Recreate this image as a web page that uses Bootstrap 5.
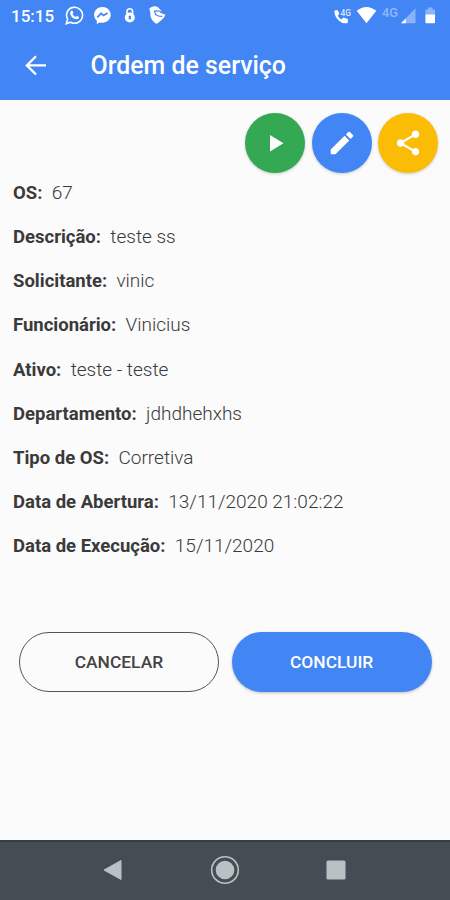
<!DOCTYPE html>
<html lang="pt-BR">
<head>
<meta charset="utf-8">
<meta name="viewport" content="width=device-width, initial-scale=1">
<title>Ordem de serviço</title>
<link href="https://cdn.jsdelivr.net/npm/bootstrap@5.3.0/dist/css/bootstrap.min.css" rel="stylesheet">
<style>
body{font-family:Roboto,sans-serif;background:#fbfbfc;color:#3a3a3a;height:900px;overflow:hidden}
.blue-bg{background:#4285f4}
.top-area{height:100px}
.status-bar{height:32px;padding:0 12px 0 11px}
.clock{font-size:17px;font-weight:500;line-height:32px;width:54px}
.title-bar{height:68px;padding-left:24px}
.title-text{font-size:24.9px;font-weight:500;line-height:68px;margin:0 0 0 42.5px}
.actions{padding:13px 12px 0 0;gap:6.5px}
.fab{width:60px;height:60px;padding:0;border:0;color:#fff;box-shadow:0 1px 3px rgba(0,0,0,.2)}
.green{background:#34a853}.yellow{background:#fbbc05}
.fields{padding:0 13px;margin-top:-2px}
.field{height:44.15px;line-height:44.15px;white-space:nowrap}
.field dt{font-weight:700;font-size:18.5px;margin-right:9.3px}
.field dd{font-weight:300;font-size:19px}
.choices{padding:0 18.5px 0 19px;margin-top:64px;gap:13px}
.choice{height:60px;border-radius:30px;font-size:17.4px;font-weight:500;padding:0}
.cancel{border:1px solid #555;color:#444}
.done{color:#fff;border:0;box-shadow:0 1px 3px rgba(0,0,0,.25)}
.done:hover{color:#fff}
.nav-keys{height:60px;background:#454d54;border-top:2px solid #353f43;padding:0 104px 2px 103px}
svg{display:block;flex:none}
</style>
<script src="https://cdn.jsdelivr.net/npm/bootstrap@5.3.0/dist/js/bootstrap.bundle.min.js"></script>
</head>
<body class="d-flex flex-column">
<header class="blue-bg text-white top-area">
  <div class="status-bar d-flex align-items-center">
    <span class="clock">15:15</span>
    <svg width="105" height="32" viewBox="65 0 105 32" fill="none">
      <path d="M66.3 23.7l1.3-4.5a8 8 0 1 1 3 3z" stroke="#fff" stroke-width="1.6"/>
      <path d="M70.6 11.3q1.5-1.6 2.1-.2l.7 1.7-.9 1.3q1.1 2.2 3.2 3l1.1-1.2 2.3 1.1q-.2 2.4-2.6 2.3-5.900-1.100-6.400-6.400z" fill="#fff"/>
      <path d="M102.400 7c-4.700 0-8.300 3.400-8.300 7.800 0 2.400 1 4.400 2.700 5.800V24l3-1.600c5.900 1.500 10.900-2.200 10.900-7.600 0-4.400-3.600-7.800-8.300-7.800z" fill="#fff"/>
      <path d="M97.300 17.300l3.900-4 2.300 2.200 4-2.500" stroke="#4285f4" stroke-width="1.700"/>
      <path d="M127 14v-2.500a2.800 2.800 0 0 1 5.600 0V14" stroke="#fff" stroke-width="1.600"/>
      <circle cx="129.800" cy="17.500" r="5" fill="#fff"/><path d="M129.800 15.700v3.600" stroke="#4285f4" stroke-width="2.200"/>
      <path d="M149.300 8.500q4-3.500 8.500-1.500l4.200 4.500-2.500 1 5.900 2.300q-1.500 4.500-9 9.200-5-3.200-5.900-7.800.3-3.700-1.200-7.700z" fill="#fff"/>
      <path d="M161.500 11.700q-3.500-1.300-7-.5l1.300 3.600q3.200 2 6.500 1.500" stroke="#4285f4" stroke-width="1.200"/>
    </svg>
    <svg class="ms-auto" width="105" height="32" viewBox="333 0 105 32">
      <path d="M334.500 10.500l3-.5 1.900 3.800-1.700 1.900q1.200 2.500 3.700 3.700l2-1.900 4.400 1.500v3.900q-4.900 1.700-9.300-2.700-4.500-4.500-4-9.700z" fill="#fff"/>
      <text x="340.500" y="16" fill="#dce9ff" font-size="9.500" font-weight="500" textLength="10.500" lengthAdjust="spacingAndGlyphs">4G</text>
      <path d="M356.700 10.800q9.700-7.600 19.600 0l-9.800 12.500z" fill="#fff"/>
      <text x="382" y="17" fill="#8fb8fb" font-size="12" font-weight="500" textLength="16" lengthAdjust="spacingAndGlyphs">4G</text>
      <path d="M415.500 8.300v15h-14.500z" fill="#8ab4f8"/><path d="M405.800 18.500v4.800h-4.700z" fill="#fff"/>
      <path d="M428 7.500h4.500v2h2.500v6h-9.600v-6h2.600z" fill="#8ab4f8"/><path d="M425.400 14.500h9.600v7.700q0 1-1 1h-7.600q-1 0-1-1z" fill="#fff"/>
    </svg>
  </div>
  <div class="title-bar d-flex align-items-center">
    <svg width="24" height="24" viewBox="0 0 24 24" fill="none" stroke="#fff" stroke-width="2.300"><path d="M12 2.300L2.800 11.400l9.200 9.100M3 11.400H22"/></svg>
    <h1 class="title-text">Ordem de serviço</h1>
  </div>
</header>
<main class="flex-grow-1">
  <div class="actions d-flex justify-content-end">
    <button class="fab green rounded-circle d-flex align-items-center justify-content-center" aria-label="Iniciar"><svg width="30" height="30" viewBox="0 0 30 30"><path d="M10 7v16.500L23.500 15.200z" fill="#fff"/></svg></button>
    <button class="fab blue-bg rounded-circle d-flex align-items-center justify-content-center" aria-label="Editar"><svg width="30" height="30" viewBox="0 0 24 24" fill="#fff"><path d="M3 17.250V21h3.750L17.810 9.940l-3.750-3.750L3 17.250zM20.710 7.040a1 1 0 0 0 0-1.410l-2.340-2.340a1 1 0 0 0-1.410 0l-1.830 1.830 3.750 3.750 1.830-1.830z"/></svg></button>
    <button class="fab yellow rounded-circle d-flex align-items-center justify-content-center" aria-label="Compartilhar"><svg width="30" height="30" viewBox="0 0 24 24" fill="#fff"><path d="M18 16.080c-.76 0-1.440.3-1.960.77L8.910 12.700c.05-.23.090-.46.090-.7s-.04-.47-.09-.7l7.050-4.110c.54.5 1.250.81 2.040.81 1.660 0 3-1.340 3-3s-1.340-3-3-3-3 1.340-3 3c0 .24.040.47.090.7L8.040 9.810C7.500 9.310 6.790 9 6 9c-1.660 0-3 1.340-3 3s1.340 3 3 3c.79 0 1.500-.31 2.040-.81l7.120 4.160c-.05.210-.08.430-.08.650 0 1.610 1.310 2.920 2.920 2.920s2.920-1.310 2.920-2.920-1.310-2.920-2.920-2.920z"/></svg></button>
  </div>
  <div class="fields">
    <dl class="field d-flex m-0"><dt>OS:</dt><dd class="m-0">67</dd></dl>
    <dl class="field d-flex m-0"><dt>Descrição:</dt><dd class="m-0">teste ss</dd></dl>
    <dl class="field d-flex m-0"><dt>Solicitante:</dt><dd class="m-0">vinic</dd></dl>
    <dl class="field d-flex m-0"><dt>Funcionário:</dt><dd class="m-0">Vinicius</dd></dl>
    <dl class="field d-flex m-0"><dt>Ativo:</dt><dd class="m-0">teste - teste</dd></dl>
    <dl class="field d-flex m-0"><dt>Departamento:</dt><dd class="m-0">jdhdhehxhs</dd></dl>
    <dl class="field d-flex m-0"><dt>Tipo de OS:</dt><dd class="m-0">Corretiva</dd></dl>
    <dl class="field d-flex m-0"><dt>Data de Abertura:</dt><dd class="m-0">13/11/2020 21:02:22</dd></dl>
    <dl class="field d-flex m-0"><dt>Data de Execução:</dt><dd class="m-0">15/11/2020</dd></dl>
  </div>
  <div class="choices d-flex">
    <button class="btn choice cancel flex-fill w-50">CANCELAR</button>
    <button class="btn choice done blue-bg flex-fill w-50">CONCLUIR</button>
  </div>
</main>
<footer class="nav-keys d-flex align-items-center justify-content-between">
  <svg width="20" height="24" viewBox="0 0 20 24"><path d="M1 12L18 2.500v19z" fill="#b8c1c3" stroke="#b8c1c3" stroke-linejoin="round"/></svg>
  <svg width="30" height="30" viewBox="0 0 30 30"><circle cx="15" cy="15" r="13.300" fill="none" stroke="#b8c1c3" stroke-width="1.600"/><circle cx="15" cy="15" r="9.300" fill="#b8c1c3"/></svg>
  <svg width="20" height="20" viewBox="0 0 20 20"><rect x=".5" y=".5" width="19" height="19" rx="1.500" fill="#b8c1c3"/></svg>
</footer>
</body>
</html>
